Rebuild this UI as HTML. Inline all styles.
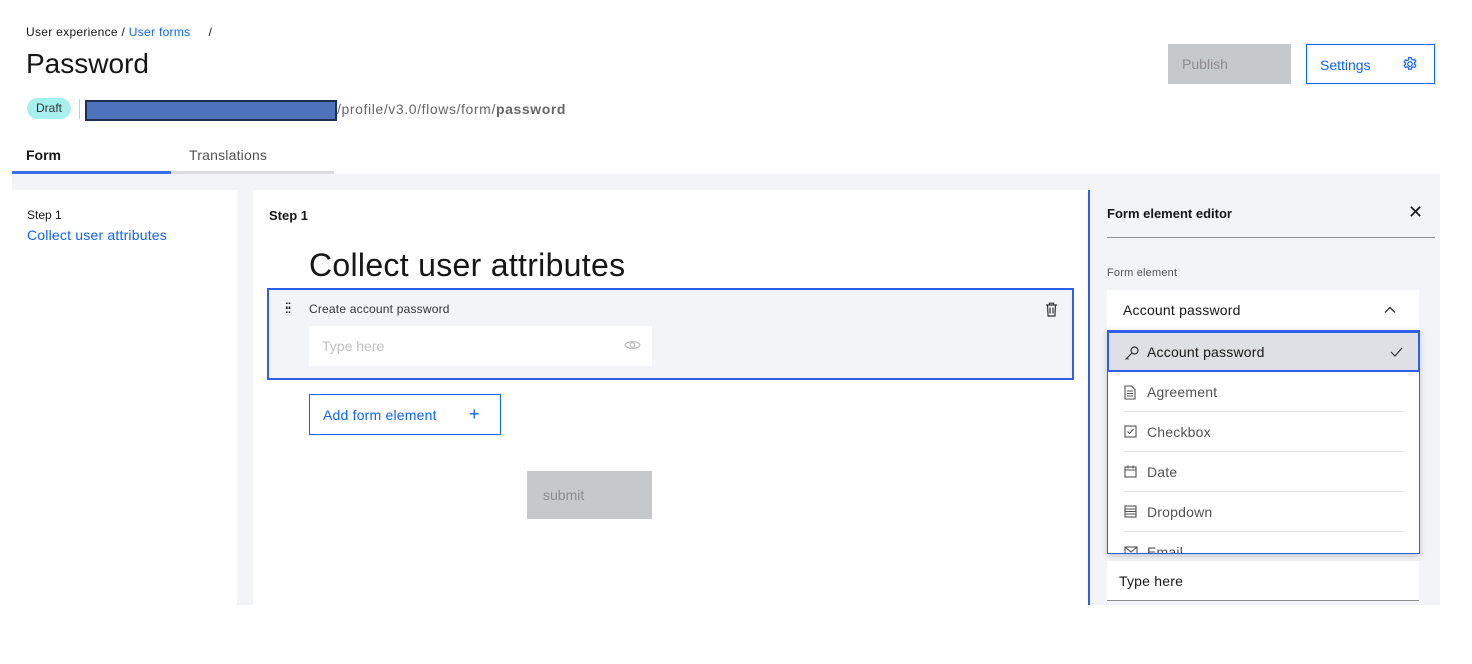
<!DOCTYPE html>
<html><head><meta charset="utf-8"><style>
*{box-sizing:border-box;margin:0;padding:0}
body{width:1472px;height:664px;background:#fff;font-family:"Liberation Sans",sans-serif;color:#161616;position:relative;overflow:hidden}
.a{position:absolute}
</style></head><body>
<div class="a" style="left:26px;top:25px;font-size:12px;letter-spacing:.3px">User experience / <span style="color:#0f62fe">User forms</span>&nbsp;&nbsp;&nbsp;&nbsp; /</div>
<div class="a" style="left:26px;top:48px;font-size:28px">Password</div>
<div class="a" style="left:27px;top:98px;width:44px;height:21px;border-radius:11px;background:#a7f0ef;font-size:12px;color:#333;text-align:center;line-height:21px">Draft</div>
<div class="a" style="left:79px;top:99px;width:1px;height:20px;background:#ccc"></div>
<div class="a" style="left:85px;top:100px;width:252px;height:21px;background:#4f72bd;border:2px solid #1f2d4f"></div>
<div class="a" style="left:337px;top:101px;font-size:14px;color:#666;letter-spacing:.6px">/profile/v3.0/flows/form/<b>password</b></div>
<div class="a" style="left:1168px;top:44px;width:123px;height:40px;background:#c6c9cc;color:#8d8d8d;font-size:14px;padding:12px 14px">Publish</div>
<div class="a" style="left:1306px;top:44px;width:129px;height:40px;border:1px solid #0f62fe;color:#0f62fe;font-size:14px;padding:12px 13px">Settings
<svg class="a" style="left:95px;top:11px" width="16" height="16" viewBox="0 0 16 16" fill="none" stroke="#0f62fe" stroke-width="1.2"><circle cx="8" cy="8" r="2.3"/><path d="M6.8 1.5h2.4l.4 1.8 1.3.7 1.7-.7 1.2 2.1-1.3 1.2v1.6l1.3 1.2-1.2 2.1-1.7-.7-1.3.7-.4 1.8H6.8l-.4-1.8-1.3-.7-1.7.7-1.2-2.1 1.3-1.2V7.2L2.2 6l1.2-2.1 1.7.7 1.3-.7z"/></svg></div>
<div class="a" style="left:26px;top:147px;font-size:14px;font-weight:bold">Form</div>
<div class="a" style="left:189px;top:147px;font-size:14px;color:#525252;letter-spacing:.2px">Translations</div>
<div class="a" style="left:12px;top:171px;width:159px;height:3px;background:#3a6ee8"></div>
<div class="a" style="left:171px;top:171px;width:163px;height:3px;background:#dcdcdc"></div>
<div class="a" style="left:12px;top:174px;width:1428px;height:431px;background:#f2f4f8"></div>
<div class="a" style="left:12px;top:190px;width:225px;height:415px;background:#fff"></div>
<div class="a" style="left:27px;top:208px;font-size:12px">Step 1</div>
<div class="a" style="left:27px;top:227px;font-size:14px;color:#0f62fe;letter-spacing:.2px">Collect user attributes</div>
<div class="a" style="left:253px;top:190px;width:835px;height:415px;background:#fff"></div>
<div class="a" style="left:269px;top:208px;font-size:13px;font-weight:bold">Step 1</div>
<div class="a" style="left:309px;top:247px;font-size:32px;letter-spacing:.3px">Collect user attributes</div>
<div class="a" style="left:267px;top:288px;width:807px;height:92px;border:2px solid #2f5fe8;background:#f2f4f8"></div>
<div class="a" style="left:285px;top:303px;font-size:11px;line-height:5px;letter-spacing:-1px;font-weight:bold">::<br>::</div>
<div class="a" style="left:309px;top:302px;font-size:12px;color:#333;letter-spacing:.2px">Create account password</div>
<svg class="a" style="left:1045px;top:302px" width="13" height="15" viewBox="0 0 13 15" fill="none" stroke="#333" stroke-width="1.2"><path d="M1 3h11M4.5 3V1.2h4V3M2.5 3l.6 11h6.8l.6-11M5 5.5v6M8 5.5v6"/></svg>
<div class="a" style="left:309px;top:326px;width:343px;height:40px;background:#fff;font-size:14px;color:#c0c0c0;padding:12px 13px">Type here</div>
<svg class="a" style="left:624px;top:339px" width="17" height="12" viewBox="0 0 17 12" fill="none" stroke="#bbb" stroke-width="1.2"><path d="M1 6C3.5 1.5 13.5 1.5 16 6 13.5 10.5 3.5 10.5 1 6z"/><circle cx="8.5" cy="6" r="2.3"/></svg>
<div class="a" style="left:309px;top:394px;width:192px;height:41px;border:1px solid #0f62fe;color:#0f62fe;font-size:14px;padding:12px 13px;letter-spacing:.2px">Add form element<span class="a" style="left:159px;top:9px;font-size:18px">+</span></div>
<div class="a" style="left:527px;top:471px;width:125px;height:48px;background:#c6c9cc;color:#8d8d8d;font-size:14px;padding:16px 16px">submit</div>
<div class="a" style="left:1088px;top:190px;width:2px;height:415px;background:#2f5fe8"></div>
<div class="a" style="left:1107px;top:206px;font-size:13px;font-weight:bold">Form element editor</div>
<div class="a" style="left:1408px;top:202px;font-size:18px">✕</div>
<div class="a" style="left:1107px;top:237px;width:328px;height:1px;background:#8d8d8d"></div>
<div class="a" style="left:1107px;top:267px;font-size:11px;color:#525252;letter-spacing:.2px">Form element</div>
<div class="a" style="left:1107px;top:290px;width:312px;height:40px;background:#fff;font-size:14px;padding:12px 16px;letter-spacing:.2px">Account password
<svg class="a" style="left:277px;top:16px" width="12" height="8" viewBox="0 0 12 8" fill="none" stroke="#161616" stroke-width="1.2"><path d="M1 6.5 6 1.5 11 6.5"/></svg></div>
<div class="a" style="left:1107px;top:330px;width:313px;height:224px;background:#fff;border:1px solid #2f5fe8;box-shadow:0 2px 6px rgba(0,0,0,.2);overflow:hidden;letter-spacing:.2px">
 <div style="height:41px;background:#dde0e4;border:2px solid #2f5fe8;margin:0 0 0 -1px;width:313px;position:relative;font-size:14px;padding:11px 38px">Account password
  <svg class="a" style="left:15px;top:12px" width="16" height="16" viewBox="0 0 16 16" fill="none" stroke="#333" stroke-width="1.2"><circle cx="10.5" cy="5.5" r="3.5"/><path d="M8 8 1.5 14.5M3 13l1.5 1.5"/></svg>
  <svg class="a" style="left:281px;top:14px" width="13" height="10" viewBox="0 0 13 10" fill="none" stroke="#333" stroke-width="1.2"><path d="M1 5l4 4 7-8"/></svg></div>
 <div style="position:relative;margin:0 16px;height:40px;border-bottom:1px solid #e0e0e0;font-size:14px;color:#525252;padding:12px 23px">Agreement<svg class="a" style="left:0;top:13px" width="12" height="15" viewBox="0 0 12 15" fill="none" stroke="#525252" stroke-width="1.1"><path d="M1 1h6.5L11 4.5V14H1zM3 6h6M3 8.5h6M3 11h6"/></svg></div>
 <div style="position:relative;margin:0 16px;height:40px;border-bottom:1px solid #e0e0e0;font-size:14px;color:#525252;padding:12px 23px">Checkbox<svg class="a" style="left:0;top:13px" width="13" height="13" viewBox="0 0 13 13" fill="none" stroke="#525252" stroke-width="1.1"><rect x="1" y="1" width="11" height="11"/><path d="M3.5 6.5l2 2 4-4.5"/></svg></div>
 <div style="position:relative;margin:0 16px;height:40px;border-bottom:1px solid #e0e0e0;font-size:14px;color:#525252;padding:12px 23px">Date<svg class="a" style="left:0;top:13px" width="13" height="13" viewBox="0 0 13 13" fill="none" stroke="#525252" stroke-width="1.1"><rect x="1" y="2" width="11" height="10"/><path d="M1 5h11M4 0.5v3M9 0.5v3"/></svg></div>
 <div style="position:relative;margin:0 16px;height:40px;border-bottom:1px solid #e0e0e0;font-size:14px;color:#525252;padding:12px 23px">Dropdown<svg class="a" style="left:0;top:13px" width="13" height="13" viewBox="0 0 13 13" fill="none" stroke="#525252" stroke-width="1.1"><rect x="1" y="1" width="11" height="11"/><path d="M1 4h11M1 6.5h11M1 9h11"/></svg></div>
 <div style="position:relative;margin:0 16px;height:40px;font-size:14px;color:#525252;padding:12px 23px">Email<svg class="a" style="left:0;top:14px" width="14" height="11" viewBox="0 0 14 11" fill="none" stroke="#525252" stroke-width="1.1"><rect x="1" y="1" width="12" height="9"/><path d="M1 1l6 5 6-5"/></svg></div>
</div>
<div class="a" style="left:1107px;top:561px;width:312px;height:40px;background:#fff;border-bottom:1px solid #8d8d8d;font-size:14px;padding:12px 12px;letter-spacing:.2px">Type here</div>
</body></html>
